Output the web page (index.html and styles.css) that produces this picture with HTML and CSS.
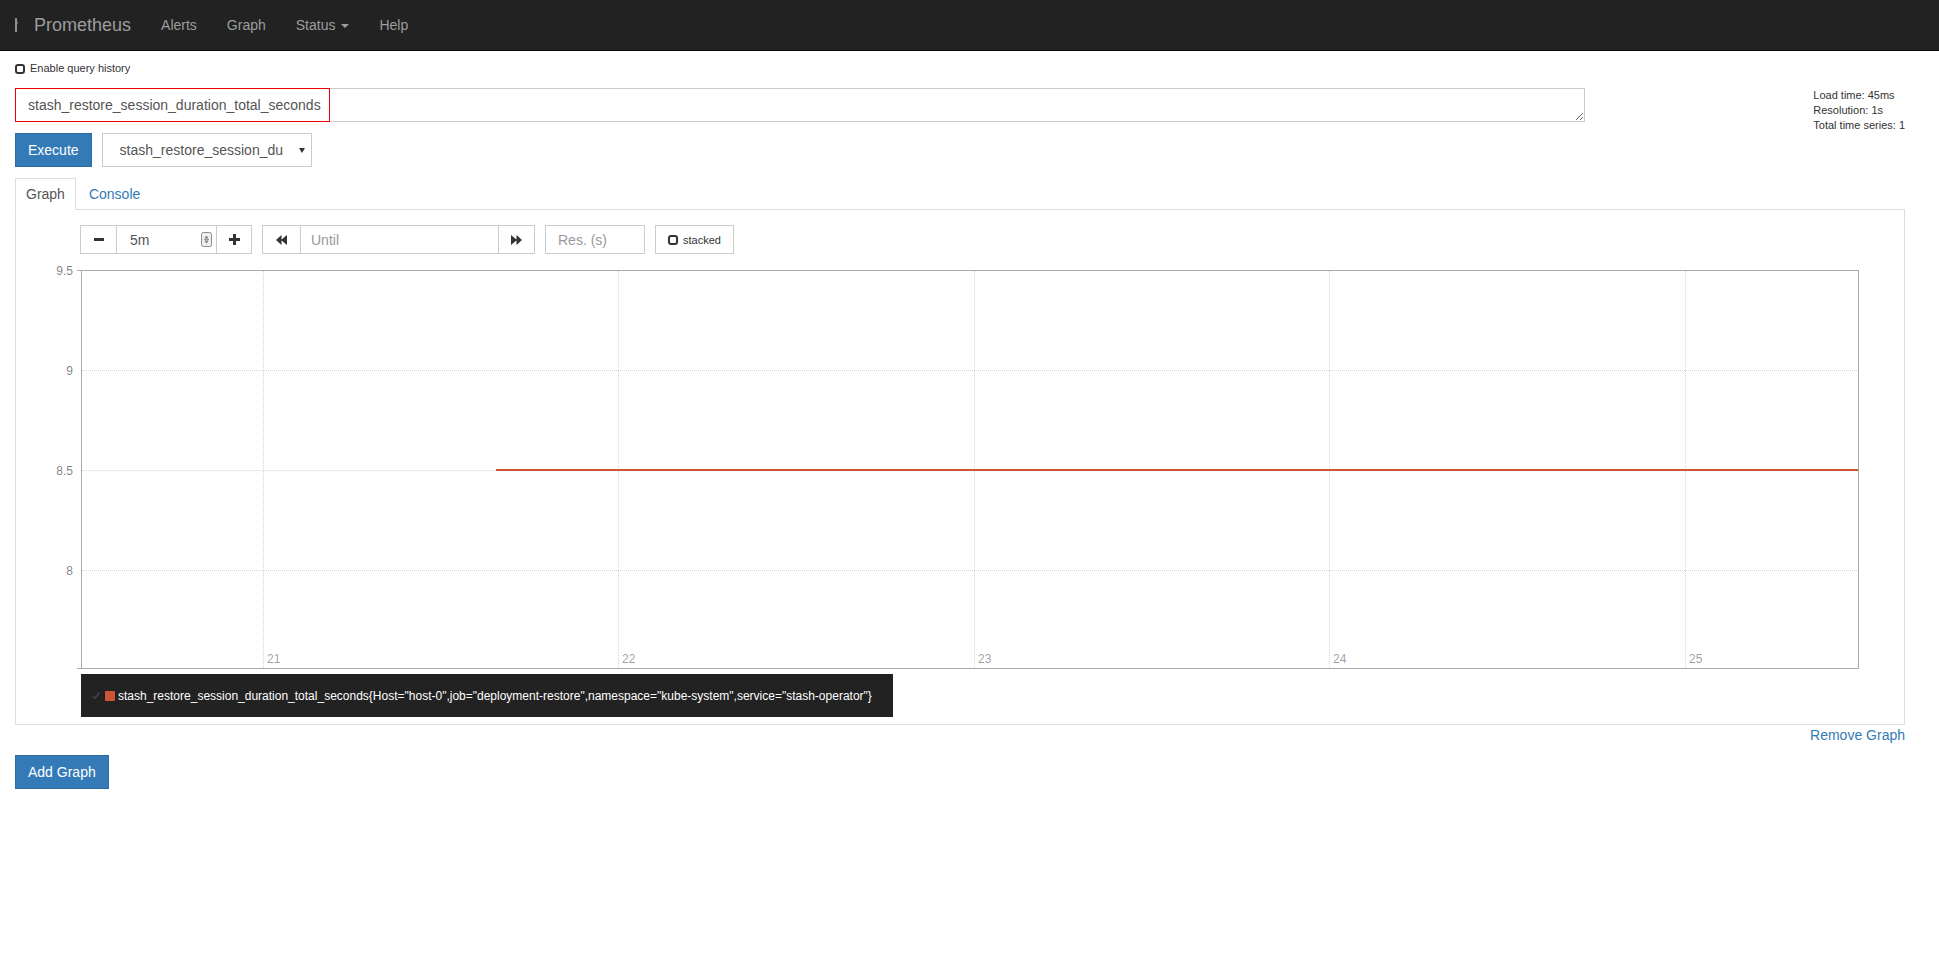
FILE: index.html
```html
<!DOCTYPE html>
<html>
<head>
<meta charset="utf-8">
<title>Prometheus Time Series Collection and Processing Server</title>
<link rel="stylesheet" href="styles.css">
</head>
<body>
<nav class="navbar">
  <a class="brand"><span class="brand-img"><svg width="5" height="14" viewBox="0 0 5 14"><rect x="0" y="0" width="2" height="14" fill="#8f8f8f"/><rect x="2" y="3" width="1" height="3" fill="#5a5a5a"/></svg></span>Prometheus</a>
  <a class="nav-link">Alerts</a>
  <a class="nav-link">Graph</a>
  <a class="nav-link">Status <span class="caret"></span></a>
  <a class="nav-link">Help</a>
</nav>

<div class="page">
  <div class="history">
    <span class="check"></span>
    <span>Enable query history</span>
  </div>

  <div class="expr-row">
    <div class="expr-col">
      <textarea class="expr" rows="1">stash_restore_session_duration_total_seconds</textarea>
      <div class="hint-box"></div>
    </div>
    <div class="stats">
      <div>Load time: 45ms</div>
      <div>Resolution: 1s</div>
      <div>Total time series: 1</div>
    </div>
  </div>

  <div class="exec-row">
    <button class="btn btn-primary">Execute</button>
    <div class="select">
      <span class="select-text">stash_restore_session_du</span>
      <span class="select-arrow"></span>
    </div>
  </div>

  <ul class="tabs">
    <li class="tab active">Graph</li>
    <li class="tab">Console</li>
  </ul>

  <div class="panel">
    <div class="toolbar">
      <div class="join">
        <div class="tool w-minus"><svg width="10" height="3" viewBox="0 0 10 3"><rect width="10" height="3" fill="#333"/></svg></div>
        <div class="tool field w-range"><span class="val">5m</span><span class="spin"><svg width="11" height="15" viewBox="0 0 11 15"><rect x="0.5" y="0.5" width="10" height="14" rx="2" fill="#efefef" stroke="#8c8c8c"/><path d="M5.5 3.5 L7.5 6.5 L3.5 6.5 Z" fill="#777"/><path d="M5.5 11.5 L7.5 8.5 L3.5 8.5 Z" fill="#777"/><rect x="3" y="7" width="5" height="1" fill="#999"/></svg></span></div>
        <div class="tool w-plus"><svg width="11" height="11" viewBox="0 0 11 11"><rect x="4" y="0" width="3" height="11" fill="#333"/><rect x="0" y="4" width="11" height="3" fill="#333"/></svg></div>
      </div>
      <div class="join">
        <div class="tool w-back"><svg width="11" height="10" viewBox="0 0 11 10"><path d="M0 5 L5.5 0 L5.5 10 Z M5 5 L11 0 L11 10 Z" fill="#333"/></svg></div>
        <div class="tool field w-until"><span class="ph">Until</span></div>
        <div class="tool w-fwd"><svg width="11" height="10" viewBox="0 0 11 10"><path d="M11 5 L5.5 0 L5.5 10 Z M6 5 L0 0 L0 10 Z" fill="#333"/></svg></div>
      </div>
      <div class="tool field w-res"><span class="ph">Res. (s)</span></div>
      <div class="tool w-stacked"><span class="check small"></span><span class="stacked-label">stacked</span></div>
    </div>

    <svg class="chart" width="1888" height="414" viewBox="0 0 1888 414">
      <g class="grid">
        <line x1="66" y1="110.5" x2="1842" y2="110.5"/>
        <line x1="66" y1="210.5" x2="1842" y2="210.5"/>
        <line x1="66" y1="310.5" x2="1842" y2="310.5"/>
        <line x1="247.5" y1="11" x2="247.5" y2="408"/>
        <line x1="602.5" y1="11" x2="602.5" y2="408"/>
        <line x1="958.5" y1="11" x2="958.5" y2="408"/>
        <line x1="1313.5" y1="11" x2="1313.5" y2="408"/>
        <line x1="1669.5" y1="11" x2="1669.5" y2="408"/>
      </g>
      <rect class="frame" x="65.5" y="10.5" width="1777" height="398"/>
      <line class="frame" x1="61" y1="10.5" x2="65" y2="10.5"/>
      <line class="frame" x1="61" y1="408.5" x2="65" y2="408.5"/>
      <g class="ylabels">
        <text x="57" y="14.5">9.5</text>
        <text x="57" y="114.5">9</text>
        <text x="57" y="214.5">8.5</text>
        <text x="57" y="314.5">8</text>
      </g>
      <g class="xlabels">
        <text x="251" y="403">21</text>
        <text x="606" y="403">22</text>
        <text x="962" y="403">23</text>
        <text x="1317" y="403">24</text>
        <text x="1673" y="403">25</text>
      </g>
      <line class="series" x1="480" y1="210" x2="1842" y2="210"/>
    </svg>

    <div class="legend">
      <span class="action"><svg width="8" height="7" viewBox="0 0 8 7"><path d="M0.5 4 L3 6.2 L7.5 0.5" fill="none" stroke="#3b4452" stroke-width="1.6"/></svg></span>
      <span class="swatch"></span>
      <span class="label">stash_restore_session_duration_total_seconds{Host="host-0",job="deployment-restore",namespace="kube-system",service="stash-operator"}</span>
    </div>
  </div>

  <div class="remove-row"><a class="link">Remove Graph</a></div>

  <button class="btn btn-primary add">Add Graph</button>
</div>
</body>
</html>
```

FILE: styles.css
```css
* { box-sizing: border-box; }

body {
  margin: 0;
  font-family: "Liberation Sans", Arial, sans-serif;
  font-size: 14px;
  line-height: 20px;
  color: #333;
  background: #fff;
}

/* navbar */
.navbar {
  display: flex;
  align-items: center;
  height: 51px;
  background: #222;
  border-bottom: 1px solid #080808;
}
.brand {
  display: flex;
  align-items: center;
  height: 50px;
  padding: 0 15px;
  font-size: 18px;
  color: #9d9d9d;
}
.brand-img {
  display: inline-flex;
  width: 19px;
  align-items: center;
}
.nav-link {
  padding: 0 15px;
  line-height: 50px;
  color: #9d9d9d;
  font-size: 14px;
}
.caret {
  display: inline-block;
  width: 0;
  height: 0;
  margin-left: 2px;
  vertical-align: middle;
  border-top: 4px solid #9d9d9d;
  border-left: 4px solid transparent;
  border-right: 4px solid transparent;
}

/* page */
.page {
  width: 1920px;
  padding: 0 15px;
}

.history {
  display: flex;
  align-items: center;
  gap: 5px;
  margin-top: 10px;
  height: 15px;
  font-size: 11px;
  line-height: 15px;
}
.check {
  display: inline-block;
  width: 10px;
  height: 10px;
  border: 2px solid #333;
  border-radius: 3px;
  background: #fff;
}

.expr-row {
  display: flex;
  margin-top: 12px;
  height: 45px;
}
.expr-col {
  position: relative;
  width: 1570px;
}
.expr {
  display: block;
  width: 1570px;
  height: 34px;
  margin: 0;
  padding: 6px 12px;
  border: 1px solid #ccc;
  border-radius: 0;
  font-family: "Liberation Sans", Arial, sans-serif;
  font-size: 14px;
  line-height: 20px;
  color: #555;
  background: #fff;
  overflow: hidden;
}
.hint-box {
  position: absolute;
  left: 0;
  top: 0;
  width: 315px;
  height: 34px;
  border: 1px solid #e00;
  border-radius: 0;
  pointer-events: none;
}
.stats {
  margin-left: auto;
  font-size: 11px;
  line-height: 15px;
  color: #333;
}

.exec-row {
  display: flex;
  gap: 10px;
}
.btn {
  height: 34px;
  padding: 6px 12px;
  border: 1px solid transparent;
  border-radius: 0;
  font-family: "Liberation Sans", Arial, sans-serif;
  font-size: 14px;
  line-height: 20px;
}
.btn-primary {
  color: #fff;
  background: #337ab7;
  border-color: #2e6da4;
}
.select {
  display: flex;
  align-items: center;
  width: 210px;
  height: 34px;
  padding: 0 6px 0 17px;
  border: 1px solid #ccc;
  background: #fff;
  color: #555;
}
.select-text {
  white-space: nowrap;
}
.select-arrow {
  margin-left: auto;
  width: 0;
  height: 0;
  border-top: 5px solid #333;
  border-left: 3px solid transparent;
  border-right: 3px solid transparent;
}

/* tabs */
.tabs {
  display: flex;
  margin: 11px 0 0;
  padding: 0;
  list-style: none;
  border-bottom: 1px solid #ddd;
}
.tab {
  margin-right: 2px;
  margin-bottom: -1px;
  padding: 5px 10px;
  border: 1px solid transparent;
  line-height: 20px;
  color: #337ab7;
}
.tab.active {
  color: #555;
  background: #fff;
  border-color: #ddd #ddd transparent;
}

.panel {
  border: 1px solid #ddd;
  border-top: 0;
  padding: 15px 0 7px;
}

.toolbar {
  display: flex;
  gap: 10px;
  margin-left: 64px;
  height: 29px;
}
.join {
  display: flex;
}
.join > .tool + .tool {
  margin-left: -1px;
}
.tool {
  display: flex;
  align-items: center;
  justify-content: center;
  height: 29px;
  border: 1px solid #ccc;
  background: #fff;
}
.field {
  justify-content: flex-start;
}
.w-minus { width: 37px; }
.w-range { width: 101px; padding-left: 13px; padding-right: 4px; }
.w-plus { width: 36px; }
.w-back { width: 39px; }
.w-until { width: 199px; padding-left: 10px; }
.w-fwd { width: 37px; }
.w-res { width: 100px; padding-left: 12px; }
.w-stacked { width: 79px; justify-content: flex-start; padding-left: 12px; gap: 5px; }
.val { color: #555; }
.spin { margin-left: auto; display: flex; }
.ph { color: #999; }
.check.small { width: 10px; height: 10px; }
.stacked-label { font-size: 11px; color: #333; }

.chart {
  display: block;
  margin-top: 6px;
}
.grid line {
  stroke: rgba(0, 0, 0, 0.17);
  stroke-width: 1;
  stroke-dasharray: 1 1;
}
.frame {
  fill: none;
  stroke: #aaa;
  stroke-width: 1;
}
.ylabels text {
  font-family: "Liberation Sans", Arial, sans-serif;
  font-size: 12px;
  fill: rgba(0, 0, 0, 0.5);
  text-anchor: end;
}
.xlabels text {
  font-family: "Liberation Sans", Arial, sans-serif;
  font-size: 12px;
  fill: rgba(0, 0, 0, 0.4);
}
.series {
  stroke: #cd5334;
  stroke-width: 2;
}

.legend {
  display: flex;
  align-items: center;
  width: 812px;
  height: 43px;
  margin-left: 65px;
  padding-left: 11px;
  background: #222;
  color: #fff;
  font-size: 12px;
}
.action {
  display: flex;
  width: 8px;
  margin-right: 5px;
}
.swatch {
  width: 10px;
  height: 10px;
  margin-right: 3px;
  border-radius: 1px;
  background: #cd5334;
}

.remove-row {
  text-align: right;
  line-height: 20px;
}
.link {
  color: #337ab7;
}
.add {
  margin-top: 10px;
}
```
